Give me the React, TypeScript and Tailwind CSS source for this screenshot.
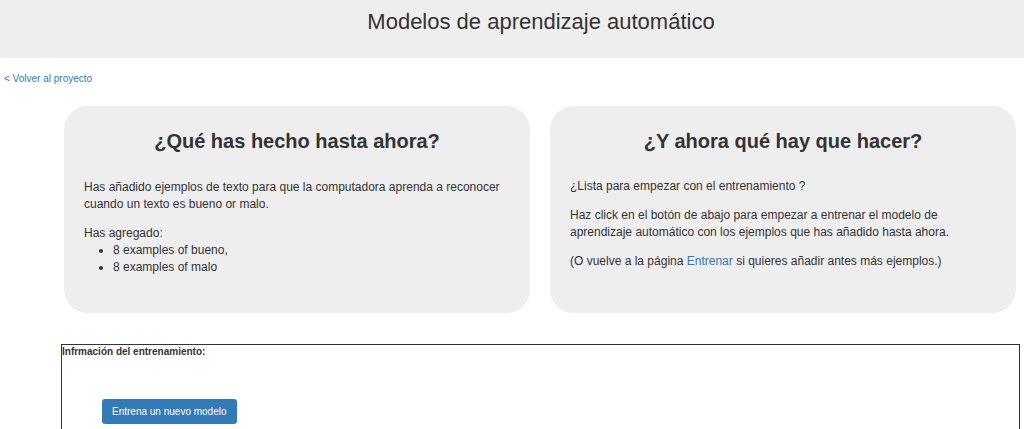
const App = () => {
  return (
    <div className="min-h-screen bg-white font-['Liberation_Sans',Arial,sans-serif] text-[#333]">
      <header className="h-[58px] bg-[#eeeeee] pl-[58px] pt-[9px] text-center">
        <h1 className="text-[22px] font-normal leading-[26px] text-[#333]">Modelos de aprendizaje automático</h1>
      </header>

      <div className="px-1 pt-[14px] text-[10px] leading-[14px]">
        <a href="#" className="text-[#337ab7]">
          &lt; Volver al proyecto
        </a>
      </div>

      <div className="mt-[20px] flex gap-5 pl-[64px]">
        <section className="h-[207px] w-[466px] rounded-[24px] bg-[#eeeeee] px-5 pt-[23px]">
          <h2 className="text-center text-[20px] font-bold leading-[24px]">¿Qué has hecho hasta ahora?</h2>
          <p className="mt-[26px] text-[12px] leading-[17px]">
            Has añadido ejemplos de texto para que la computadora aprenda a reconocer cuando un texto es bueno or malo.
          </p>
          <p className="mt-[12px] text-[12px] leading-[17px]">Has agregado:</p>
          <ul className="list-disc pl-[29px] text-[12px] leading-[17px]">
            <li>8 examples of bueno,</li>
            <li>8 examples of malo</li>
          </ul>
        </section>

        <section className="h-[207px] w-[466px] rounded-[24px] bg-[#eeeeee] px-5 pt-[23px]">
          <h2 className="text-center text-[20px] font-bold leading-[24px]">¿Y ahora qué hay que hacer?</h2>
          <p className="mt-[25px] text-[12px] leading-[17px]">¿Lista para empezar con el entrenamiento ?</p>
          <p className="mt-[12px] text-[12px] leading-[17px]">
            Haz click en el botón de abajo para empezar a entrenar el modelo de aprendizaje automático con los ejemplos que has añadido hasta ahora.
          </p>
          <p className="mt-[12px] text-[12px] leading-[17px]">
            (O vuelve a la página{" "}
            <a href="#" className="text-[#337ab7]">
              Entrenar
            </a>{" "}
            si quieres añadir antes más ejemplos.)
          </p>
        </section>
      </div>

      <div className="ml-[61px] mt-[31px] h-[120px] w-[959px] border border-[#333]">
        <p className="text-[10px] font-bold leading-[13px]">Infrmación del entrenamiento:</p>
        <button className="ml-[40px] mt-[41px] h-[25px] rounded-[3px] bg-[#337ab7] px-[10px] text-[10px] text-white">
          Entrena un nuevo modelo
        </button>
      </div>
    </div>
  );
};

export default App;
